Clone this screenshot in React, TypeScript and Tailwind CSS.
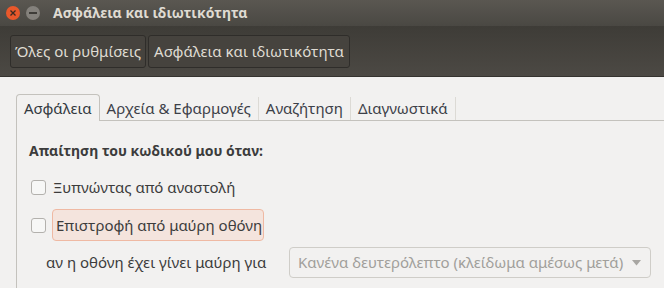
import React from "react";

const font = { fontFamily: '"Noto Sans", "DejaVu Sans", sans-serif' };

function Checkbox() {
  return (
    <span className="block w-[15px] h-[15px] rounded-[3px] border border-[#b3b1ad] bg-[#f7f7f6] shrink-0" />
  );
}

export default function App() {
  const tabs = ["Ασφάλεια", "Αρχεία & Εφαρμογές", "Αναζήτηση", "Διαγνωστικά"];
  return (
    <div className="w-[664px] h-[288px] overflow-hidden bg-[#f2f1f0] text-[#3c3c3c]" style={font}>
      {/* title bar */}
      <div className="h-[26px] flex items-center bg-gradient-to-b from-[#5a5751] to-[#4a4843] pl-[6px]">
        <span className="w-[14px] h-[14px] rounded-full bg-[#e9582b] flex items-center justify-center">
          <svg width="8" height="8" viewBox="0 0 8 8">
            <path d="M1.5 1.5 L6.5 6.5 M6.5 1.5 L1.5 6.5" stroke="#3c2a22" strokeWidth="1.3" />
          </svg>
        </span>
        <span className="ml-[6px] w-[14px] h-[14px] rounded-full bg-[#84817c] flex items-center justify-center">
          <span className="block w-[8px] h-[1.5px] bg-[#3e3c38]" />
        </span>
        <span className="ml-[13px] text-[14px] font-bold text-[#dfdbd2] leading-none">
          Ασφάλεια και ιδιωτικότητα
        </span>
      </div>
      {/* toolbar */}
      <div className="h-[51px] flex items-center gap-[2px] px-[10px] bg-gradient-to-b from-[#3e3c37] to-[#4c4944] border-b border-[#35332f]">
        <div className="h-[33px] w-[136px] flex items-center justify-center rounded-[3px] border border-[#2f2d2a] bg-[#46433e] text-[15px] text-[#dfdbd2]">
          Όλες οι ρυθμίσεις
        </div>
        <div className="h-[33px] w-[202px] flex items-center justify-center rounded-[3px] border border-[#2f2d2a] bg-[#46433e] text-[15px] text-[#dfdbd2]">
          Ασφάλεια και ιδιωτικότητα
        </div>
      </div>
      {/* notebook */}
      <div className="pl-[16px] pt-[17px]">
        <div className="flex items-end border-b border-[#c4c2bd] h-[27px]">
          {tabs.map((t, i) =>
            i === 0 ? (
              <div
                key={t}
                className="h-[27px] px-[7px] flex items-center border border-b-0 border-[#c4c2bd] rounded-t-[4px] bg-[#f2f1f0] text-[15px] text-[#33393f] -mb-px"
              >
                {t}
              </div>
            ) : (
              <div
                key={t}
                className="h-[23px] px-[7px] flex items-center border-r border-[#dcdad5] text-[15px] text-[#3c4048]"
              >
                {t}
              </div>
            )
          )}
        </div>
        <div className="border-l border-[#c4c2bd] h-[200px] pl-[12px] pt-[20px]">
          <div className="text-[14px] font-bold leading-[20px]">Απαίτηση του κωδικού μου όταν:</div>
          <div className="mt-[16px] flex items-center gap-[7px] pl-[2px] h-[20px]">
            <Checkbox />
            <span className="text-[15px]">Ξυπνώντας από αναστολή</span>
          </div>
          <div className="mt-[12px] flex items-center gap-[6px] pl-[2px]">
            <Checkbox />
            <span className="h-[32px] w-[212px] shrink-0 px-[3px] flex items-center whitespace-nowrap rounded-[4px] border border-[#efb9a3] bg-[#f4e4dd] text-[15px]">
              Επιστροφή από μαύρη οθόνη
            </span>
          </div>
          <div className="mt-[6px] flex items-center pl-[17px]">
            <span className="text-[15px] w-[243px] whitespace-nowrap">αν η οθόνη έχει γίνει μαύρη για</span>
            <div className="h-[31px] w-[362px] shrink-0 flex items-center justify-between pl-[8px] pr-[9px] rounded-[4px] border border-[#cfcdc8] bg-[#f2f1f0] text-[15px] text-[#a19f9b] whitespace-nowrap">
              <span>Κανένα δευτερόλεπτο (κλείδωμα αμέσως μετά)</span>
              <svg width="9" height="6" viewBox="0 0 9 6">
                <path d="M0 0 H9 L4.5 5.5 Z" fill="#a8a6a2" />
              </svg>
            </div>
          </div>
        </div>
      </div>
    </div>
  );
}
